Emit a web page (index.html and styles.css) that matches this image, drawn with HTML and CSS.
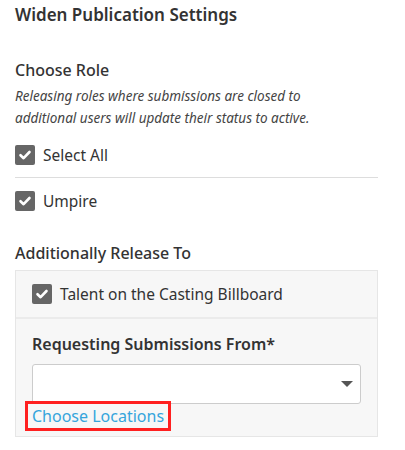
FILE: index.html
```html
<!DOCTYPE html>
<html>
<head>
<meta charset="utf-8">
<link rel="stylesheet" href="styles.css">
</head>
<body>
<div class="panel">
  <h2 class="title">Widen Publication Settings</h2>
  <h3 class="section-title">Choose Role</h3>
  <p class="hint">Releasing roles where submissions are closed to additional users will update their status to active.</p>
  <label class="check-row first">
    <span class="box"><svg viewBox="0 0 20 20" width="20" height="20"><path d="M5.5 10.2 L8.6 13.2 L14.5 7" fill="none" stroke="#fff" stroke-width="2.6" stroke-linecap="round" stroke-linejoin="round"/></svg></span>
    <span class="check-label">Select All</span>
  </label>
  <div class="divider"></div>
  <label class="check-row">
    <span class="box"><svg viewBox="0 0 20 20" width="20" height="20"><path d="M5.5 10.2 L8.6 13.2 L14.5 7" fill="none" stroke="#fff" stroke-width="2.6" stroke-linecap="round" stroke-linejoin="round"/></svg></span>
    <span class="check-label">Umpire</span>
  </label>
  <h3 class="section-title release">Additionally Release To</h3>
  <div class="release-box">
    <div class="release-row">
      <label class="check-row">
        <span class="box"><svg viewBox="0 0 20 20" width="20" height="20"><path d="M5.5 10.2 L8.6 13.2 L14.5 7" fill="none" stroke="#fff" stroke-width="2.6" stroke-linecap="round" stroke-linejoin="round"/></svg></span>
        <span class="check-label">Talent on the Casting Billboard</span>
      </label>
    </div>
    <div class="release-body">
      <div class="field-label">Requesting Submissions From*</div>
      <div class="select"><span class="caret"></span></div>
      <a class="link" href="#">Choose Locations</a>
    </div>
  </div>
</div>
</body>
</html>
```
FILE: styles.css
```css
body {
  margin: 0;
  font-family: "Noto Sans", sans-serif;
  color: #333;
  background: #fff;
}
.panel {
  width: 363px;
  padding: 0 15px;
}
.title {
  font-size: 17px;
  font-weight: 600;
  line-height: 24px;
  margin: 3px 0 0;
}
.section-title {
  font-size: 16px;
  font-weight: 500;
  line-height: 22px;
  margin: 32px 0 0;
}
.hint {
  font-size: 13.5px;
  font-style: italic;
  line-height: 22px;
  margin: 4px 0 0;
  max-width: 320px;
  color: #444;
}
.check-row {
  display: flex;
  align-items: center;
  gap: 8px;
  font-size: 15.5px;
  line-height: 22px;
}
.check-row.first {
  margin-top: 15px;
}
.box {
  width: 20px;
  height: 20px;
  border-radius: 2px;
  background: #666;
  display: flex;
}
.divider {
  height: 1px;
  background: #ddd;
  margin: 11px 0 12px;
}
.section-title.release {
  margin-top: 30px;
}
.release-box {
  margin-top: 6px;
  background: #f7f7f7;
  border: 1px solid #e6e6e6;
}
.release-row {
  padding: 12px 16px;
  border-bottom: 2px solid #ebebeb;
}
.release-body {
  padding: 14px 16px 8px;
}
.field-label {
  font-size: 16px;
  font-weight: 600;
  line-height: 22px;
}
.select {
  margin-top: 9px;
  width: 320px;
  height: 38px;
  background: #fff;
  border: 1px solid #ccc;
  border-radius: 3px;
  display: flex;
  align-items: center;
  justify-content: flex-end;
  padding-right: 7px;
}
.caret {
  width: 0;
  height: 0;
  border-left: 6px solid transparent;
  border-right: 6px solid transparent;
  border-top: 6px solid #555;
}
.link {
  display: inline-block;
  margin-left: -4px;
  padding: 0 4px;
  font-size: 16px;
  line-height: 24px;
  color: #35a5dc;
  text-decoration: none;
  outline: 3px solid #ff2020;
  outline-offset: 0;
}
```
